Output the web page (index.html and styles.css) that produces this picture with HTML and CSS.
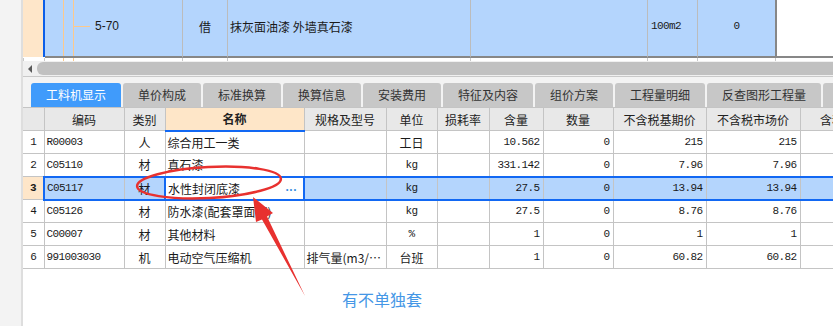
FILE: index.html
```html
<!DOCTYPE html>
<html lang="zh-CN">
<head>
  <meta charset="UTF-8">
  <title>工料机显示</title>
  <link rel="stylesheet" href="styles.css">
</head>
<body>
  <div class="side"></div>

  <div class="main">
    <!-- 定额行 -->
    <div class="tree-row">
      <div class="tr-head"></div>
      <div class="tr-mark"></div>
      <div class="tc tc-code">5-70</div>
      <div class="tc tc-type">借</div>
      <div class="tc tc-name">抹灰面油漆 外墙真石漆</div>
      <div class="tc tc-spec"></div>
      <div class="tc tc-unit mono">100m2</div>
      <div class="tc tc-qty mono">0</div>
      <div class="tr-rest"></div>
    </div>
    <div class="ticks"></div>

    <div class="hscroll">
      <div class="hs-btn"><span class="hs-arrow"></span></div>
      <div class="hs-thumb"></div>
    </div>

    <div class="tabs">
      <div class="tab active w90">工料机显示</div>
      <div class="tab w78">单价构成</div>
      <div class="tab w78">标准换算</div>
      <div class="tab w78">换算信息</div>
      <div class="tab w78">安装费用</div>
      <div class="tab w90">特征及内容</div>
      <div class="tab w78">组价方案</div>
      <div class="tab w90">工程量明细</div>
      <div class="tab w114">反查图形工程量</div>
      <div class="tab wlast"></div>
    </div>

    <div class="grid-wrap">
      <table class="grid">
        <colgroup>
          <col style="width:21px">
          <col style="width:80px">
          <col style="width:41px">
          <col style="width:139px">
          <col style="width:82px">
          <col style="width:51px">
          <col style="width:52px">
          <col style="width:54px">
          <col style="width:70px">
          <col style="width:93px">
          <col style="width:94px">
          <col style="width:100px">
        </colgroup>
        <thead>
          <tr>
            <th class="rn"></th>
            <th>编码</th>
            <th>类别</th>
            <th class="name-h">名称</th>
            <th>规格及型号</th>
            <th>单位</th>
            <th>损耗率</th>
            <th>含量</th>
            <th>数量</th>
            <th>不含税基期价</th>
            <th>不含税市场价</th>
            <th>含税市场价</th>
          </tr>
        </thead>
        <tbody>
          <tr>
            <td class="rn mono">1</td>
            <td class="mono">R00003</td>
            <td class="c">人</td>
            <td>综合用工一类</td>
            <td></td>
            <td class="c">工日</td>
            <td></td>
            <td class="num mono">10.562</td>
            <td class="num mono">0</td>
            <td class="num mono">215</td>
            <td class="num mono">215</td>
            <td></td>
          </tr>
          <tr>
            <td class="rn mono">2</td>
            <td class="mono">C05110</td>
            <td class="c">材</td>
            <td>真石漆</td>
            <td></td>
            <td class="c mono">kg</td>
            <td></td>
            <td class="num mono">331.142</td>
            <td class="num mono">0</td>
            <td class="num mono">7.96</td>
            <td class="num mono">7.96</td>
            <td></td>
          </tr>
          <tr class="sel">
            <td class="rn mono">3</td>
            <td class="mono first">C05117</td>
            <td class="c">材</td>
            <td class="editing"><div class="edit-box"><span>水性封闭底漆</span><span class="dots">...</span></div></td>
            <td></td>
            <td class="c mono">kg</td>
            <td></td>
            <td class="num mono">27.5</td>
            <td class="num mono">0</td>
            <td class="num mono">13.94</td>
            <td class="num mono">13.94</td>
            <td></td>
          </tr>
          <tr>
            <td class="rn mono">4</td>
            <td class="mono">C05126</td>
            <td class="c">材</td>
            <td>防水漆(配套罩面漆)</td>
            <td></td>
            <td class="c mono">kg</td>
            <td></td>
            <td class="num mono">27.5</td>
            <td class="num mono">0</td>
            <td class="num mono">8.76</td>
            <td class="num mono">8.76</td>
            <td></td>
          </tr>
          <tr>
            <td class="rn mono">5</td>
            <td class="mono">C00007</td>
            <td class="c">材</td>
            <td>其他材料</td>
            <td></td>
            <td class="c mono">%</td>
            <td></td>
            <td class="num mono">1</td>
            <td class="num mono">0</td>
            <td class="num mono">1</td>
            <td class="num mono">1</td>
            <td></td>
          </tr>
          <tr>
            <td class="rn mono">6</td>
            <td class="mono">991003030</td>
            <td class="c">机</td>
            <td>电动空气压缩机</td>
            <td class="clip">排气量(m3/…</td>
            <td class="c">台班</td>
            <td></td>
            <td class="num mono">1</td>
            <td class="num mono">0</td>
            <td class="num mono">60.82</td>
            <td class="num mono">60.82</td>
            <td></td>
          </tr>
        </tbody>
      </table>
    </div>

    <div class="note">有不单独套</div>
  </div>

  <!-- 标注 -->
  <svg class="marks" width="833" height="326" viewBox="0 0 833 326">
    <ellipse cx="209" cy="182.5" rx="72" ry="15.5" transform="rotate(-3 209 182.5)" fill="none" stroke="#e8312f" stroke-width="2.5"/>
    <polygon points="253,197 273,213 267,216.5 305,296 262,219.5 256,222" fill="#e8312f"/>
  </svg>
</body>
</html>
```

FILE: styles.css
```css
* {
  box-sizing: border-box;
}
html, body {
  margin: 0;
  padding: 0;
}
body {
  position: relative;
  display: flex;
  width: 833px;
  height: 326px;
  overflow: hidden;
  background: #fff;
  color: #1a1a1a;
  font-family: "Noto Sans CJK SC", "Liberation Sans", sans-serif;
  font-size: 12px;
}
.mono {
  font-family: "Liberation Mono", "Noto Sans CJK SC", monospace;
  font-size: 11px;
  letter-spacing: -0.6px;
}
.side {
  flex: none;
  width: 23px;
  background: #f3f3f3;
  border-right: 2px solid #dedede;
}
.main {
  flex: none;
  width: 810px;
  background: #fff;
}

/* top row */
.tree-row {
  display: flex;
  height: 58px;
}
.tr-head {
  width: 20px;
  margin-bottom: 1px;
  background: #fee6c9;
}
.tr-mark {
  width: 2px;
  margin-bottom: 1px;
  background: #0b5ee8;
}
.tc {
  display: flex;
  align-items: center;
  padding-bottom: 4px;
  background: #b4d5fd;
  border-right: 1px solid #bcbcbc;
  border-bottom: 2px solid #878787;
  white-space: nowrap;
}
.tc-code {
  width: 138px;
  padding-left: 50px;
  font-family: "Liberation Sans", sans-serif;
  background-color: #b4d5fd;
  background-image:
    linear-gradient(#fcc98c, #fcc98c),
    linear-gradient(#fcc98c, #fcc98c),
    linear-gradient(#fcc98c, #fcc98c);
  background-size: 1px 100%, 1px 100%, 17px 1px;
  background-position: 18px 0, 28px 0, 28px 26px;
  background-repeat: no-repeat;
}
.tc-type {
  width: 45px;
  justify-content: center;
}
.tc-name {
  width: 243px;
  padding-left: 2px;
}
.tc-spec {
  width: 177px;
}
.tc-unit {
  width: 50px;
  padding-left: 3px;
}
.tc-qty {
  width: 79px;
  justify-content: center;
  border-right: 2px solid #878787;
}
.tr-rest {
  flex: 1;
  border-bottom: 2px solid #878787;
}
.ticks {
  height: 3px;
  background-image:
    linear-gradient(#c8c8c8, #c8c8c8),
    linear-gradient(#c8c8c8, #c8c8c8),
    linear-gradient(#fcc98c, #fcc98c),
    linear-gradient(#fcc98c, #fcc98c),
    linear-gradient(#c8c8c8, #c8c8c8),
    linear-gradient(#c8c8c8, #c8c8c8),
    linear-gradient(#c8c8c8, #c8c8c8),
    linear-gradient(#c8c8c8, #c8c8c8),
    linear-gradient(#c8c8c8, #c8c8c8),
    linear-gradient(#c8c8c8, #c8c8c8);
  background-size: 1px 100%;
  background-position: 0 0, 21px 0, 40px 0, 50px 0, 159px 0, 204px 0, 447px 0, 624px 0, 674px 0, 752px 0;
  background-repeat: no-repeat;
}

/* horizontal scroll */
.hscroll {
  display: flex;
  height: 15px;
  background: #f0f0f0;
  border-top: 1px solid #f0f0f0;
  border-bottom: 1px solid #f0f0f0;
}
.hs-btn {
  display: flex;
  align-items: center;
  justify-content: center;
  width: 14px;
}
.hs-arrow {
  width: 0;
  height: 0;
  border-top: 4px solid transparent;
  border-bottom: 4px solid transparent;
  border-right: 4px solid #5a5a5a;
}
.hs-thumb {
  flex: 1;
  background: #c1c1c1;
  border-radius: 6px 0 0 6px;
}

/* tabs */
.tabs {
  display: flex;
  align-items: flex-end;
  gap: 2px;
  height: 31px;
  padding-left: 8px;
  background: #f3f3f3;
  border-top: 1px solid #c9c9c9;
  overflow: hidden;
}
.tab {
  flex: none;
  height: 24px;
  line-height: 24px;
  text-align: center;
  color: #333;
  background: #c7c7c7;
  border-radius: 3px 3px 0 0;
  white-space: nowrap;
}
.tab.active {
  background: #409bfb;
  color: #fff;
}
.w78 { width: 78px; }
.w90 { width: 90px; }
.w114 { width: 114px; }
.wlast { width: 40px; }

/* grid */
.grid-wrap {
  width: 810px;
  overflow: hidden;
}
.grid {
  width: 877px;
  table-layout: fixed;
  border-collapse: collapse;
}
.grid tr {
  height: 23px;
}
.grid th,
.grid td {
  padding: 0 2px;
  border: 1px solid #c4c4c4;
  white-space: nowrap;
  overflow: hidden;
}
.grid th:first-child,
.grid td:first-child {
  border-left: none;
}
.grid th {
  font-weight: normal;
  color: #222;
  background: #e8e8e8;
  text-align: center;
}
.grid th.name-h {
  font-weight: bold;
  background: #fee6c8;
  border-bottom: 2px solid #1268f3;
}
.grid td.rn {
  text-align: center;
  padding: 0;
}
.grid td.c {
  text-align: center;
}
.grid td.num {
  text-align: right;
  padding-right: 3px;
}
.grid td.clip {
  text-overflow: clip;
}

/* selected row */
.grid tr.sel td {
  background: #b4d5fd;
  border-top: 2px solid #1268f3;
  border-bottom: 2px solid #1268f3;
}
.grid tr.sel td.rn {
  background: #fee6c9;
  font-weight: bold;
  border-top: 1px solid #c4c4c4;
  border-bottom: 1px solid #c4c4c4;
}
.grid tr.sel td.first {
  border-left: 2px solid #1268f3;
}
.grid tr.sel td.editing {
  background: #fff;
  border: 2px solid #1268f3;
  padding: 0 6px 0 2px;
}
.edit-box {
  display: flex;
  justify-content: space-between;
  align-items: center;
}
.dots {
  font-family: "Liberation Sans", sans-serif;
  font-size: 12px;
  font-weight: bold;
  color: #3d8fe0;
  letter-spacing: 0.5px;
  line-height: 12px;
  padding-bottom: 2px;
}

/* note */
.note {
  margin-top: 20px;
  padding-left: 319px;
  font-size: 16px;
  line-height: 20px;
  color: #4597e6;
}

.marks {
  position: absolute;
  top: 0;
  left: 0;
  pointer-events: none;
}
```
